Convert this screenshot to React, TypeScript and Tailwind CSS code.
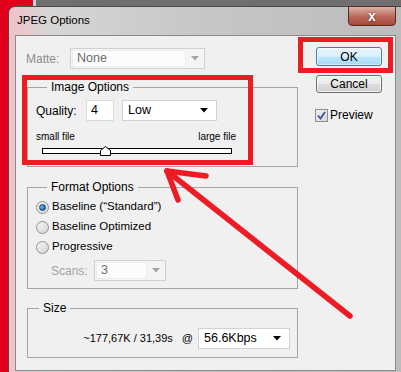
import React from "react";

const F = "font-['Liberation_Sans',Arial,sans-serif]";

function Arrow({ color = "#000" }: { color?: string }) {
  return (
    <svg width="8" height="5" viewBox="0 0 8 5">
      <polygon points="0,0 8,0 4,4.5" fill={color} />
    </svg>
  );
}

function ComboEnabled({ w, text }: { w: string; text: string }) {
  return (
    <div className={`${w} h-[21px] flex items-center bg-white border border-[#d2d2d2] pl-[5px] pr-[8px] text-[12.5px] text-black`}>
      <span className="flex-1">{text}</span>
      <Arrow />
    </div>
  );
}

function ComboDisabled({ w, text }: { w: string; text: string }) {
  return (
    <div className={`${w} h-[21px] flex items-stretch bg-[#f4f4f4] border border-[#d0d0d0] p-[1px]`}>
      <div className="flex-1 flex items-center bg-[#fcfcfc] border border-[#ececec] pl-[4px] text-[12.5px] text-[#6d6d6d]">{text}</div>
      <div className="w-[17px] flex items-center justify-center">
        <Arrow color="#a5a5a5" />
      </div>
    </div>
  );
}

function Radio({ checked }: { checked?: boolean }) {
  return (
    <div className="w-[13px] h-[13px] rounded-full border border-[#8e8f8f] bg-gradient-to-br from-[#f6f6f6] to-[#d4d4d4] flex items-center justify-center">
      {checked && (
        <div className="w-[7px] h-[7px] rounded-full bg-[radial-gradient(circle_at_35%_35%,#7cc4f4,#1b63a8_70%)] border border-[#174b7a]" />
      )}
    </div>
  );
}

export default function App() {
  return (
    <div className={`relative w-[401px] h-[372px] overflow-hidden bg-[#e0001b] ${F}`}>
      {/* background window strip above */}
      <div className="absolute left-[33px] top-0 w-[370px] h-[7px] bg-[#6f6f6f] border-l-[3px] border-[#b9d6ea]" />

      {/* dialog window */}
      <div className="absolute left-[8px] top-[6px] w-[402px] h-[372px] rounded-t-[7px] border border-[#4a4a4a] bg-[linear-gradient(to_right,#f1c2c8_0px,#d6d6d6_40px,#c6c6c6_200px,#bcbcbc_100%)] flex flex-col">
        {/* title bar */}
        <div className="relative h-[28px] flex items-center pl-[8px]">
          <span className="text-[11.5px] text-black">JPEG Options</span>
          <div className="absolute left-[339px] -top-[1px] w-[48px] h-[20px] rounded-b-[4px] border border-[#5b2a22] bg-[linear-gradient(to_bottom,#dcb3aa,#b9685a_55%,#a5483a)] flex items-center justify-center">
            <span className="text-white font-bold text-[14px] leading-none [text-shadow:0_0_2px_#3a1a14]">x</span>
          </div>
        </div>

        {/* client area */}
        <div className="ml-[6px] w-[381px] h-[336px] border border-[#8a8a8a] bg-[#f0f0f0] flex">
          {/* left column */}
          <div className="w-[282px] pl-[10px] pt-[12px] flex flex-col">
            <div className="h-[21px] flex items-center">
              <span className="w-[44px] text-[12px] text-[#8d8d8d]">Matte:</span>
              <ComboDisabled w="w-[135px]" text="None" />
            </div>

            {/* Image Options */}
            <fieldset className="ml-[1px] mt-[11px] w-[271px] h-[87px] border border-[#a5a5a5] px-[8px]">
              <legend className="ml-[11px] px-[4px] text-[12px] leading-[14px] text-black">Image Options</legend>
              <div className="pt-[6px] h-[27px] flex items-center">
                <span className="w-[50px] text-[12px] text-black">Quality:</span>
                <div className="w-[28px] h-[21px] bg-white border border-[#dadada] flex items-center pl-[4px] text-[12.5px]">4</div>
                <div className="ml-[8px]">
                  <ComboEnabled w="w-[95px]" text="Low" />
                </div>
              </div>
              <div className="mt-[10px] w-[200px] h-[12px] flex justify-between text-[10px] leading-[12px] text-black">
                <span>small file</span>
                <span>large file</span>
              </div>
              <div className="relative ml-[6px] mt-[5px] w-[190px] h-[6px] bg-white border border-black">
                <svg className="absolute left-[57px] -top-[3px]" width="11" height="10" viewBox="0 0 11 10">
                  <polygon points="5.5,0.5 10.5,4.5 10.5,9.5 0.5,9.5 0.5,4.5" fill="#fff" stroke="#000" strokeWidth="1" />
                </svg>
              </div>
            </fieldset>

            {/* Format Options */}
            <fieldset className="ml-[1px] mt-[13px] w-[271px] h-[109px] border border-[#a5a5a5] px-[8px]">
              <legend className="ml-[11px] px-[4px] text-[12px] leading-[14px] text-black">Format Options</legend>
              <div className="pt-[3px] flex flex-col text-[11.5px] text-black">
                <div className="h-[20px] flex items-center gap-[3px]"><Radio checked /><span>Baseline (“Standard”)</span></div>
                <div className="h-[20px] flex items-center gap-[3px]"><Radio /><span>Baseline Optimized</span></div>
                <div className="h-[20px] flex items-center gap-[3px]"><Radio /><span>Progressive</span></div>
              </div>
              <div className="mt-[3px] pl-[15px] h-[21px] flex items-center">
                <span className="w-[43px] text-[12px] text-[#a3a3a3]">Scans:</span>
                <ComboDisabled w="w-[72px]" text="3" />
              </div>
            </fieldset>

            {/* Size */}
            <fieldset className="ml-[1px] mt-[12px] w-[271px] h-[57px] border border-[#a5a5a5] pr-[7px]">
              <legend className="ml-[11px] px-[4px] text-[12px] leading-[14px] text-black">Size</legend>
              <div className="pt-[13px] h-[34px] flex items-center justify-end">
                <span className="text-[11px] text-black">~177,67K / 31,39s</span>
                <span className="ml-[9px] text-[11px] text-black">@</span>
                <div className="ml-[5px]">
                  <ComboEnabled w="w-[92px]" text="56.6Kbps" />
                </div>
              </div>
            </fieldset>
          </div>

          {/* right column */}
          <div className="ml-[18px] pt-[11px] flex flex-col">
            <div className="w-[66px] h-[19px] rounded-[3px] border border-[#3c7fb1] bg-[linear-gradient(to_bottom,#eaf6fd,#d9f0fc_50%,#bee6fd_50%,#a7d9f5)] shadow-[inset_0_0_0_1px_#ffffff80] flex items-center justify-center text-[12px] text-black">OK</div>
            <div className="mt-[9px] w-[66px] h-[18px] rounded-[3px] border border-[#707070] bg-[linear-gradient(to_bottom,#f2f2f2,#ebebeb_50%,#dddddd_50%,#cfcfcf)] shadow-[inset_0_0_0_1px_#ffffffa0] flex items-center justify-center text-[12px] text-black">Cancel</div>
            <div className="-ml-[1px] mt-[13px] flex items-center gap-[2px]">
              <div className="w-[13px] h-[13px] border border-[#8e8f8f] bg-gradient-to-br from-[#f0f0f0] to-[#d8d8d8] flex items-center justify-center">
                <svg width="9" height="9" viewBox="0 0 9 9">
                  <path d="M1 4.5 L3.5 7.5 L8 1" fill="none" stroke="#3a4fa0" strokeWidth="1.8" />
                </svg>
              </div>
              <span className="text-[12px] text-black">Preview</span>
            </div>
          </div>
        </div>
      </div>

      {/* red annotations */}
      <div className="absolute left-[22px] top-[75px] w-[231px] h-[90px] border-[5px] border-[#ed1c24]" />
      <div className="absolute left-[298px] top-[37px] w-[95px] h-[36px] border-[5px] border-[#ed1c24]" />
      <svg className="absolute left-0 top-0 pointer-events-none" width="401" height="372" viewBox="0 0 401 372">
        <g stroke="#ed1c24" strokeWidth="5.5" strokeLinecap="round" fill="none">
          <line x1="350" y1="316" x2="167" y2="171" />
          <line x1="167" y1="171" x2="206" y2="176" />
          <line x1="167" y1="171" x2="178" y2="200" />
        </g>
      </svg>
    </div>
  );
}
